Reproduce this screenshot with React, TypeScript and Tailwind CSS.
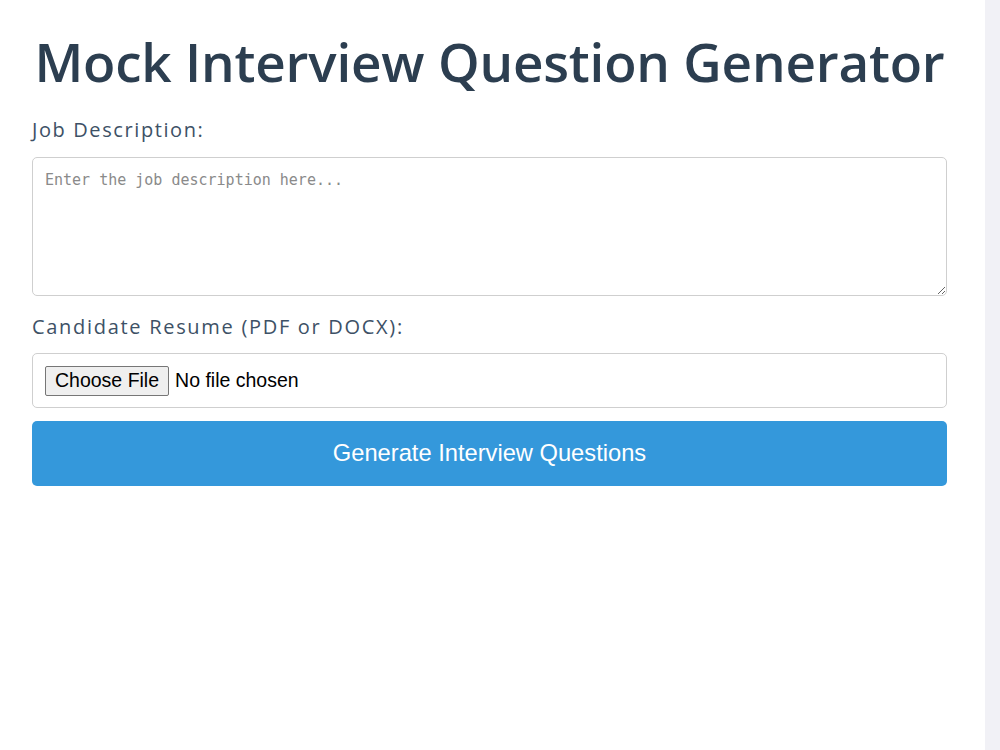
import React from "react";

export default function App() {
  return (
    <div className="flex min-h-[750px] w-full bg-[#f1f1f6]">
      <div className="w-[985px] bg-white pl-8 pr-[38px] pt-[26px]" style={{ fontFamily: '"Open Sans", sans-serif' }}>
        <h1 className="whitespace-nowrap text-center text-[53px] font-semibold leading-[72px] tracking-[-0.2px] text-[#2c3e50]">
          Mock Interview Question Generator
        </h1>
        <div className="mt-[18px] text-[20px] leading-[28px] tracking-[1.6px] text-[#3d5166]">Job Description:</div>
        <textarea
          className="mt-[13px] block h-[139px] w-full resize-y rounded-[5px] border border-[#cfcfcf] px-3 py-[13px] text-[15px] leading-[18px] text-[#333] placeholder:text-[#8a8a8a] outline-none"
          style={{ fontFamily: '"DejaVu Sans Mono", "Liberation Mono", monospace' }}
          placeholder="Enter the job description here..."
        />
        <div className="mt-[17px] text-[20px] leading-[28px] tracking-[1.7px] text-[#3d5166]">Candidate Resume (PDF or DOCX):</div>
        <div
          className="mt-[12px] flex h-[55px] w-full items-center gap-[6px] rounded-[5px] border border-[#cfcfcf] px-3 text-[19.5px] text-black"
          style={{ fontFamily: '"Liberation Sans", Arial, sans-serif' }}
        >
          <button className="h-[30px] rounded-[2px] border border-[#767676] bg-[#efefef] px-[9px] text-[19.5px] leading-none text-black">
            Choose File
          </button>
          <span>No file chosen</span>
        </div>
        <button
          className="mt-[13px] flex h-[65px] w-full items-center justify-center rounded-[5px] bg-[#3498db] text-[23.7px] text-white"
          style={{ fontFamily: '"Liberation Sans", Arial, sans-serif' }}
        >
          Generate Interview Questions
        </button>
      </div>
    </div>
  );
}
